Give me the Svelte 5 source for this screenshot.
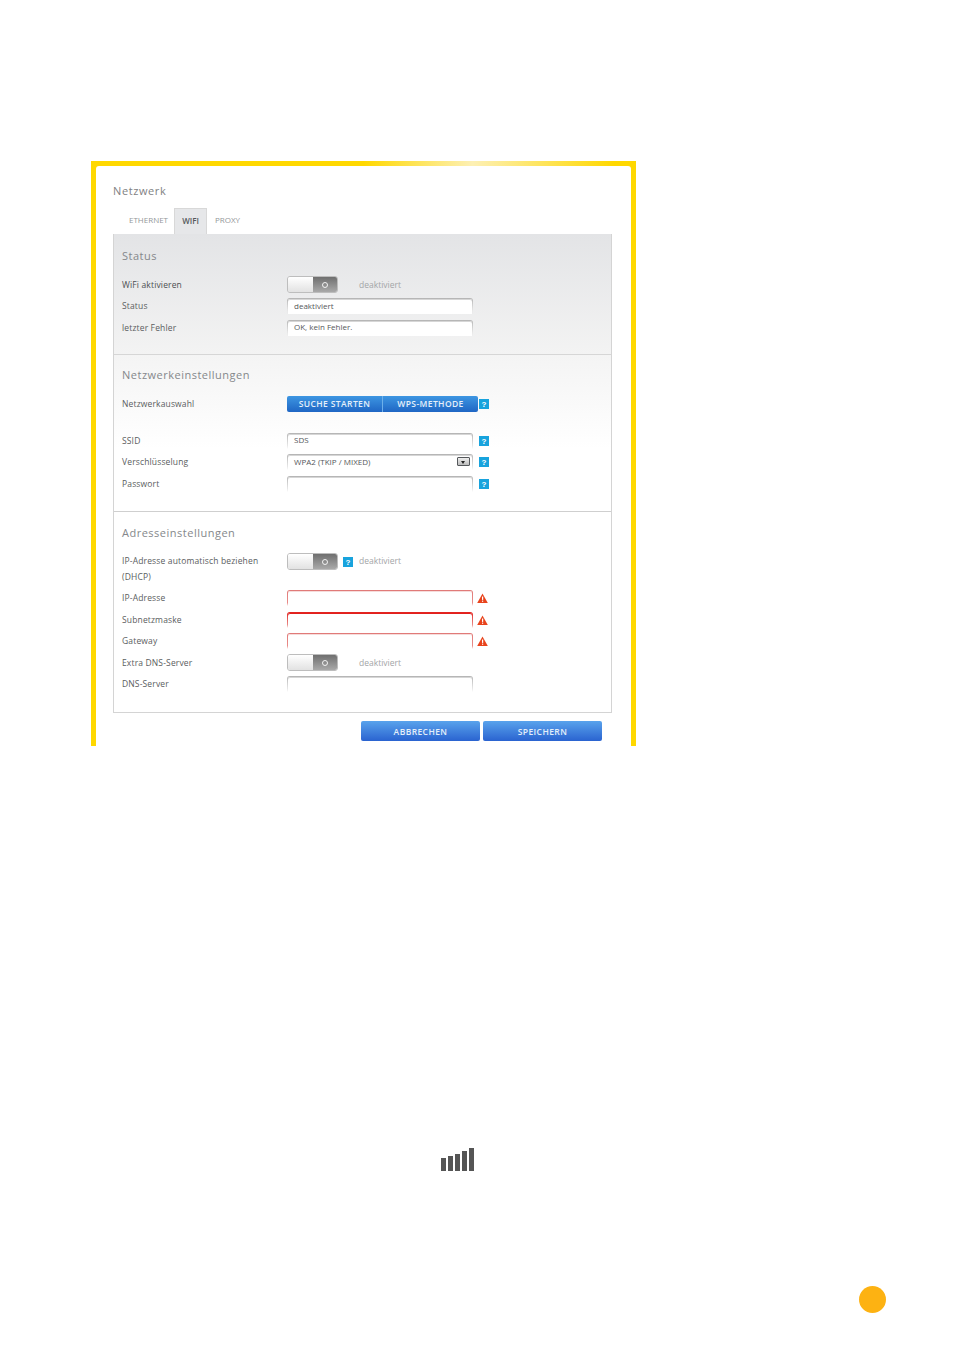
<script>
    const statusRows = [
        { label: 'Status', value: 'deaktiviert' },
        { label: 'letzter Fehler', value: 'OK, kein Fehler.' }
    ];
    const errorRows = ['IP-Adresse', 'Subnetzmaske', 'Gateway'];
    const bars = [13, 15, 17, 20, 23];
</script>

{#snippet help()}
    <svg class="help" width="10" height="10" viewBox="0 0 10 10">
        <rect width="10" height="10" fill="#18a3dd" />
        <text x="5" y="8" text-anchor="middle" class="help-mark">?</text>
    </svg>
{/snippet}

{#snippet warning()}
    <svg class="warn" width="11" height="10" viewBox="0 0 11 10">
        <path d="M5.5 0.5 L10.8 10 H0.2 Z" fill="#e8431c" />
        <rect x="5" y="3.5" width="1.2" height="3.4" fill="#fff" />
        <rect x="5" y="7.6" width="1.2" height="1.2" fill="#fff" />
    </svg>
{/snippet}

{#snippet toggle()}
    <div class="toggle">
        <div class="toggle-off"></div>
        <div class="toggle-on"><span class="toggle-dot"></span></div>
    </div>
{/snippet}

<div class="frame">
    <div class="sheet">
        <h1>Netzwerk</h1>
        <div class="tabs">
            <span class="tab">ETHERNET</span>
            <span class="tab active">WIFI</span>
            <span class="tab">PROXY</span>
        </div>

        <div class="panel">
            <section class="status">
                <h2>Status</h2>
                <div class="row">
                    <span class="label dark">WiFi aktivieren</span>
                    {@render toggle()}
                    <span class="state">deaktiviert</span>
                </div>
                {#each statusRows as row}
                    <div class="row">
                        <span class="label">{row.label}</span>
                        <input class="field" value={row.value} readonly />
                    </div>
                {/each}
            </section>

            <section class="network">
                <h2>Netzwerkeinstellungen</h2>
                <div class="row choose">
                    <span class="label">Netzwerkauswahl</span>
                    <div class="btn-group">
                        <button class="btn first">SUCHE STARTEN</button>
                        <button class="btn second">WPS-METHODE</button>
                    </div>
                    {@render help()}
                </div>
                <div class="row">
                    <span class="label">SSID</span>
                    <input class="field" value="SDS" readonly />
                    {@render help()}
                </div>
                <div class="row">
                    <span class="label">Verschlüsselung</span>
                    <div class="field select">
                        <span>WPA2 (TKIP / MIXED)</span>
                        <span class="arrow"></span>
                    </div>
                    {@render help()}
                </div>
                <div class="row">
                    <span class="label">Passwort</span>
                    <input class="field" readonly />
                    {@render help()}
                </div>
            </section>

            <section class="address">
                <h2>Adresseinstellungen</h2>
                <div class="row dhcp">
                    <span class="label">IP-Adresse automatisch beziehen (DHCP)</span>
                    {@render toggle()}
                    {@render help()}
                    <span class="state near">deaktiviert</span>
                </div>
                {#each errorRows as label, i}
                    <div class="row">
                        <span class="label">{label}</span>
                        <input class="field error" class:strong={i === 1} readonly />
                        {@render warning()}
                    </div>
                {/each}
                <div class="row">
                    <span class="label">Extra DNS-Server</span>
                    {@render toggle()}
                    <span class="state">deaktiviert</span>
                </div>
                <div class="row">
                    <span class="label">DNS-Server</span>
                    <input class="field" readonly />
                </div>
            </section>
        </div>

        <div class="actions">
            <button class="action">ABBRECHEN</button>
            <button class="action">SPEICHERN</button>
        </div>
    </div>
</div>

<div class="signal">
    {#each bars as h}
        <span class="bar" style="height: {h}px"></span>
    {/each}
</div>

<div class="dot"></div>

<style>
    :global(body) {
        background: #fff;
    }

    .frame {
        margin: 161px 0 0 91px;
        width: 545px;
        height: 585px;
        box-sizing: border-box;
        padding: 5px 5px 0 5px;
        background: linear-gradient(90deg, #ffd800 0, #ffd800 50%, #fdf0b4 70%, #ffd800 96%);
        font-family: "Open Sans", sans-serif;
    }

    .sheet {
        height: 580px;
        background: #fff;
        border-radius: 3px 3px 0 0;
        padding: 0 19px 0 17px;
    }

    h1 {
        margin: 0;
        padding-top: 17px;
        font-size: 11px;
        line-height: 16px;
        font-weight: 400;
        color: #7f8183;
        letter-spacing: 0.6px;
    }

    .tabs {
        display: flex;
        height: 26px;
        margin-top: 9px;
        padding-left: 8px;
    }

    .tab {
        padding: 0 6px 0 8px;
        font-size: 8px;
        line-height: 24px;
        color: #94979a;
    }

    .tab.active {
        width: 33px;
        box-sizing: border-box;
        margin-left: 0;
        padding: 0;
        text-align: center;
        background: #e6e7e9;
        border: 1px solid #d8d8d8;
        border-bottom: none;
        color: #55585b;
        font-weight: 600;
    }

    .panel {
        height: 479px;
        border: 1px solid #d4d4d4;
        border-top: none;
        box-sizing: border-box;
    }

    section {
        padding: 0 8px;
        box-sizing: border-box;
    }

    h2 {
        margin: 0;
        font-size: 11px;
        line-height: 14px;
        font-weight: 400;
        color: #85888b;
        letter-spacing: 0.5px;
    }

    .status {
        height: 121px;
        padding-top: 15px;
        background: linear-gradient(#e3e4e6, #f3f3f3);
        border-bottom: 1px solid #d6d6d6;
    }

    .status h2 {
        margin-bottom: 11px;
    }

    .network {
        height: 157px;
        padding-top: 13px;
        background: linear-gradient(#f4f4f4, #fff 60%);
        border-bottom: 1px solid #cfcfcf;
    }

    .network h2 {
        margin-bottom: 8px;
    }

    .address {
        height: 200px;
        padding-top: 14px;
        background: #fff;
    }

    .address h2 {
        margin-bottom: 13px;
    }

    .row {
        display: flex;
        align-items: center;
        height: 21.5px;
        font-size: 8px;
    }

    .row.choose {
        height: 27px;
        margin-bottom: 13px;
    }

    .row.choose .help {
        margin-left: 1px;
    }

    .row.dhcp {
        height: 34.5px;
        align-items: flex-start;
    }

    .label {
        width: 165px;
        flex: none;
        box-sizing: border-box;
        font-size: 8.5px;
        line-height: 16px;
        letter-spacing: 0.15px;
        color: #5a5d60;
    }

    .dhcp .label {
        padding-right: 15px;
    }

    .label.dark {
        color: #4c4f52;
    }

    .field {
        width: 186px;
        height: 16px;
        box-sizing: border-box;
        margin: 0;
        padding: 0 6px 3px;
        border: 1px solid transparent;
        border-bottom: none;
        border-radius: 3px 3px 0 0;
        background: linear-gradient(#fff, #fff) padding-box, linear-gradient(#b4b4b4, #e8e8e8 80%, transparent) border-box;
        box-shadow: inset 0 1px 0 #d6d6d6;
        font: 8px "Open Sans", sans-serif;
        color: #55585b;
        outline: none;
    }

    .field.error {
        background: linear-gradient(#fff, #fff) padding-box, linear-gradient(#e07a78, #e98b88 80%, transparent) border-box;
        box-shadow: inset 0 1px 0 #f6dcdb;
    }

    .field.error.strong {
        background: linear-gradient(#fff, #fff) padding-box, linear-gradient(#e2211d, #e98b88 80%, transparent) border-box;
        box-shadow: inset 0 1px 0 #e2211d;
    }

    .select {
        display: flex;
        align-items: center;
        justify-content: space-between;
        padding-right: 2px;
    }

    .arrow {
        width: 13px;
        height: 9px;
        border: 1px solid #55585b;
        border-radius: 1px;
        box-sizing: border-box;
        background: linear-gradient(#eee, #bbb);
        position: relative;
    }

    .arrow::after {
        content: "";
        position: absolute;
        left: 3px;
        top: 3px;
        border: 2.5px solid transparent;
        border-top: 3px solid #222;
        border-bottom: none;
    }

    .help {
        flex: none;
        margin-left: 6px;
    }

    .help-mark {
        font: 700 8px "Liberation Sans", sans-serif;
        fill: #fff;
    }

    .warn {
        flex: none;
        margin-left: 4px;
    }

    .toggle {
        flex: none;
        display: flex;
        width: 51px;
        height: 17px;
        box-sizing: border-box;
        border: 1px solid #bdbdbd;
        border-radius: 3px;
        overflow: hidden;
    }

    .toggle-off {
        width: 25px;
        background: linear-gradient(#fff, #e2e2e2);
    }

    .toggle-on {
        flex: 1;
        display: flex;
        align-items: center;
        justify-content: center;
        background: linear-gradient(#6f6f6f, #a9a9a9);
    }

    .toggle-dot {
        width: 4px;
        height: 4px;
        border: 1.5px solid #f2f2f2;
        border-radius: 50%;
    }

    .state {
        margin-left: 21px;
        font-size: 8.5px;
        color: #a3a5a7;
    }

    .state.near {
        margin-left: 6px;
    }

    .row.dhcp .help {
        margin: 4px 0 0 5px;
    }

    .row.dhcp .state {
        line-height: 16px;
    }

    .btn-group {
        display: flex;
        flex: none;
    }

    button {
        margin: 0;
        font: 600 8.5px "Open Sans", sans-serif;
        color: #e4effa;
        border: none;
        padding: 0;
        letter-spacing: 0.4px;
    }

    .btn {
        height: 16px;
        background: linear-gradient(#3d96e2, #1f66c4);
    }

    .btn.first {
        width: 96px;
        border-radius: 2px 0 0 2px;
        border-right: 1px solid #6db0ea;
    }

    .btn.second {
        width: 95px;
        border-radius: 0 2px 2px 0;
    }

    .actions {
        display: flex;
        justify-content: flex-end;
        gap: 3px;
        margin-top: 8px;
        padding-right: 10px;
    }

    .action {
        width: 119px;
        height: 20px;
        border-radius: 2px;
        background: linear-gradient(#59a3ec, #2a63d0);
    }

    .signal {
        display: flex;
        align-items: flex-end;
        gap: 2px;
        height: 24px;
        margin: 401px 0 0 441px;
    }

    .bar {
        width: 5px;
        background: #555;
    }

    .dot {
        width: 27px;
        height: 27px;
        margin: 115px 0 0 859px;
        border-radius: 50%;
        background: #fdb212;
    }
</style>
